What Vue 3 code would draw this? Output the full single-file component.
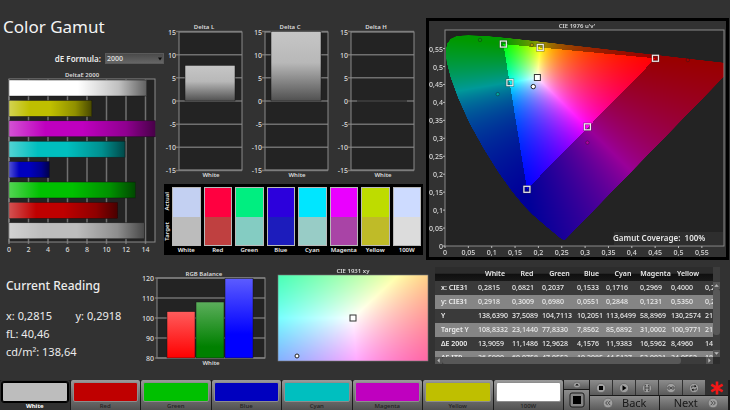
<script setup>
import { onMounted, ref } from 'vue'

const tones = {
  White: '#bdbdbd', Red: '#bf0000', Green: '#00c000', Blue: '#0000bf',
  Cyan: '#00bfbf', Magenta: '#bf00bf', Yellow: '#bfbf00', '100W': '#ffffff',
}

const deltaE = [
  { name: '100W', value: 14.1 },
  { name: 'Yellow', value: 8.5 },
  { name: 'Magenta', value: 15 },
  { name: 'Cyan', value: 11.9 },
  { name: 'Blue', value: 4.15 },
  { name: 'Green', value: 12.96 },
  { name: 'Red', value: 11.15 },
  { name: 'White', value: 13.9 },
]
const deltaETicks = [0, 2, 4, 6, 8, 10, 12, 14]
const deX = (v) => 9 + v * 9.75

const deltas = [
  { title: 'Delta L', value: 7.7 },
  { title: 'Delta C', value: 15 },
  { title: 'Delta H', value: 0 },
]
const deltaTicks = [15, 10, 5, 0, -5, -10, -15]
const dY = (v) => 81 - v * 4.63

const swatches = [
  { name: 'White', actual: '#c3d0f2', target: '#bcbcbc' },
  { name: 'Red', actual: '#ff0040', target: '#bf4040' },
  { name: 'Green', actual: '#00ee80', target: '#84ccc2' },
  { name: 'Blue', actual: '#2c00dc', target: '#1c1cbc' },
  { name: 'Cyan', actual: '#00e6ff', target: '#98ccc6' },
  { name: 'Magenta', actual: '#ea00ff', target: '#a944a6' },
  { name: 'Yellow', actual: '#bedc00', target: '#bfbb28' },
  { name: '100W', actual: '#cddbff', target: '#dcdcdc' },
]

const balance = [
  { x: 22, value: 103.2, fill: 'url(#bal-r)' },
  { x: 51, value: 108, fill: 'url(#bal-g)' },
  { x: 80, value: 119.7, fill: 'url(#bal-b)' },
]
const balanceTicks = [120, 110, 100, 90, 80]
const bY = (v) => 98 - (v - 80) * 2

const columns = ['White', 'Red', 'Green', 'Blue', 'Cyan', 'Magenta', 'Yellow', '100W']
const rows = [
  ['x: CIE31', '0,2815', '0,6821', '0,2037', '0,1533', '0,1716', '0,2969', '0,4000', '0,2815'],
  ['y: CIE31', '0,2918', '0,3009', '0,6980', '0,0551', '0,2848', '0,1231', '0,5350', '0,2918'],
  ['Y', '138,6390', '37,5089', '104,7113', '10,2051', '113,6499', '58,8969', '130,2574', '218,1042'],
  ['Target Y', '108,8332', '23,1440', '77,8330', '7,8562', '85,6892', '31,0002', '100,9771', '218,1042'],
  ['ΔE 2000', '13,9059', '11,1486', '12,9628', '4,1576', '11,9383', '16,5962', '8,4960', '14,1201'],
  ['ΔE ITP', '36,5900', '60,0758', '47,0552', '10,2085', '44,5127', '53,0021', '34,0552', '18,2210'],
]

/* CIE 1976 u'v' plot geometry */
const uX = (u) => 16 + u * 467
const vY = (v) => 225 - v * 359
const uTicks = [0, 0.05, 0.1, 0.15, 0.2, 0.25, 0.3, 0.35, 0.4, 0.45, 0.5, 0.55]
const comma = (n) => String(n).replace('.', ',')
const locus = [
  [0.2568, 0.0165], [0.2545, 0.016], [0.2461, 0.0226], [0.2347, 0.035], [0.2161, 0.0549],
  [0.1877, 0.0871], [0.169, 0.1119], [0.1441, 0.151], [0.1147, 0.2044], [0.0828, 0.2708],
  [0.0521, 0.3427], [0.0282, 0.4117], [0.0119, 0.4698], [0.0035, 0.5131], [0.0014, 0.5432],
  [0.0046, 0.5638], [0.0123, 0.577], [0.0231, 0.5837], [0.036, 0.5861], [0.0501, 0.5868],
  [0.0792, 0.5856], [0.1127, 0.5821], [0.1531, 0.5766], [0.2026, 0.5694], [0.2623, 0.5604],
  [0.3315, 0.5501], [0.4035, 0.5393], [0.4692, 0.5296], [0.5203, 0.5219], [0.583, 0.5125],
  [0.6234, 0.5065],
]
const targets = [
  [0.125, 0.5625], [0.204, 0.553], [0.4507, 0.5229], [0.139, 0.455], [0.305, 0.332], [0.1754, 0.1579],
]
const measured = [
  { u: 0.075, v: 0.574, fill: '#0a9a0a' },
  { u: 0.186, v: 0.56, fill: '#a89a00' },
  { u: 0.52, v: 0.518, fill: '#a80000' },
  { u: 0.113, v: 0.423, fill: '#00a8a0' },
  { u: 0.305, v: 0.288, fill: '#b400a0' },
]

const uvCanvas = ref(null)
const xyCanvas = ref(null)
const SCALE = 3

function linearRgb(X, Y, Z) {
  return [
    3.2406 * X - 1.5372 * Y - 0.4986 * Z,
    -0.9689 * X + 1.8758 * Y + 0.0415 * Z,
    0.0557 * X - 0.204 * Y + 1.057 * Z,
  ]
}

/* Fills a colour field; toXyz maps a plot position to tristimulus values. */
function paintField(w, h, toXyz) {
  const field = document.createElement('canvas')
  field.width = w * SCALE
  field.height = h * SCALE
  const ctx = field.getContext('2d')
  const image = ctx.createImageData(field.width, field.height)
  for (let py = 0, i = 0; py < field.height; py++) {
    for (let px = 0; px < field.width; px++, i += 4) {
      const rgb = linearRgb(...toXyz((px + 0.5) / SCALE, (py + 0.5) / SCALE))
      const top = Math.max(...rgb)
      const level = Math.min(...rgb) < -0.0001 ? 153 : 255
      for (let c = 0; c < 3; c++) image.data[i + c] = (Math.max(0, rgb[c]) / top) * level
      image.data[i + 3] = 255
    }
  }
  ctx.putImageData(image, 0, 0)
  return field
}

onMounted(() => {
  const uv = uvCanvas.value.getContext('2d')
  uv.beginPath()
  uv.rect(16 * SCALE, 9 * SCALE, 279 * SCALE, 216 * SCALE)
  uv.clip()
  uv.beginPath()
  locus.forEach(([u, v]) => uv.lineTo(uX(u) * SCALE, vY(v) * SCALE))
  uv.closePath()
  uv.clip()
  uv.drawImage(paintField(297, 236, (x, y) => {
    const u = (x - 16) / 467
    const v = Math.max(0.001, (225 - y) / 359)
    return [(9 * u) / (4 * v), 1, (12 - 3 * u - 20 * v) / (4 * v)]
  }), 0, 0)

  const xy = xyCanvas.value.getContext('2d')
  xy.beginPath()
  xy.rect(8 * SCALE, 15 * SCALE, 150 * SCALE, 86 * SCALE)
  xy.clip()
  xy.drawImage(paintField(162, 110, (px, py) => {
    const x = 0.3127 + (px - 83) / 1795
    const y = 0.329 - (py - 58) / 1021
    return [x / y, 1, (1 - x - y) / y]
  }), 0, 0)
})
</script>

<template>
  <div class="app">
    <main>
      <section class="upper">
        <div class="left">
          <h1>Color Gamut</h1>
          <div class="formula">
            <label for="formula">dE Formula:</label>
            <div class="select">
              <select id="formula"><option>2000</option></select>
              <svg class="caret" viewBox="0 0 6 4"><path d="M1 0.5h4L3 3.5z" /></svg>
            </div>
          </div>
          <svg class="chart" viewBox="0 0 165 195" role="img" aria-label="DeltaE 2000">
            <defs>
              <linearGradient id="sheen-h">
                <stop offset="0" stop-color="#fff" stop-opacity=".32" />
                <stop offset=".25" stop-color="#fff" stop-opacity="0" />
                <stop offset=".5" stop-color="#000" stop-opacity="0" />
                <stop offset=".8" stop-color="#000" stop-opacity=".25" />
                <stop offset="1" stop-color="#000" stop-opacity=".62" />
              </linearGradient>
            </defs>
            <text class="title" x="82" y="12" text-anchor="middle">DeltaE 2000</text>
            <rect class="plot" x="9" y="14" width="146" height="163" />
            <g class="grid">
              <path v-for="t in deltaETicks" :key="t" :d="`M${deX(t)} 14V179`" />
            </g>
            <rect class="frame" x="9" y="14" width="146" height="163" />
            <g v-for="(b, i) in deltaE" :key="b.name">
              <rect class="outlined" x="9" :y="15 + i * 20.4" :width="deX(b.value) - 9" height="16" :fill="tones[b.name]" />
              <rect x="9" :y="15 + i * 20.4" :width="deX(b.value) - 9" height="16" fill="url(#sheen-h)" />
            </g>
            <text v-for="t in deltaETicks" :key="t" :x="deX(t)" y="187" text-anchor="middle">{{ t }}</text>
          </svg>
        </div>

        <div class="middle">
          <svg class="chart" viewBox="0 0 260 164" role="img" aria-label="Delta charts">
            <defs>
              <linearGradient id="sheen-v" x2="0" y2="1">
                <stop offset="0" stop-color="#c6c6c6" />
                <stop offset=".45" stop-color="#b8b8b8" />
                <stop offset="1" stop-color="#505050" />
              </linearGradient>
            </defs>
            <g v-for="(d, i) in deltas" :key="d.title" :transform="`translate(${i * 86} 0)`">
              <text class="title" x="39" y="9" text-anchor="middle">{{ d.title }}</text>
              <rect class="plot" x="14" y="12" width="63" height="138" />
              <g class="grid">
                <path v-for="t in deltaTicks" :key="t" :d="`M11 ${dY(t)}H77`" />
              </g>
              <rect class="frame" x="14" y="12" width="63" height="138" />
              <rect v-if="d.value" class="outlined" x="20" :y="dY(d.value)" width="50" :height="81 - dY(d.value)" fill="url(#sheen-v)" />
              <path v-else class="flat" d="M20 81h50" />
              <text v-for="t in deltaTicks" :key="t" x="11" :y="dY(t) + 3" text-anchor="end">{{ t }}</text>
              <text class="title" x="46" y="157" text-anchor="middle">White</text>
            </g>
          </svg>
          <div class="swatches">
            <div class="side"><span>Actual</span><span>Target</span></div>
            <div v-for="s in swatches" :key="s.name" class="swatch">
              <div class="pair">
                <i :style="{ background: s.actual }"></i>
                <i :style="{ background: s.target }"></i>
              </div>
              <span>{{ s.name }}</span>
            </div>
          </div>
        </div>

        <div class="gamut">
          <div class="stack">
            <svg class="chart" viewBox="0 0 297 236"><rect class="plot" x="16" y="9" width="279" height="216" /></svg>
            <canvas ref="uvCanvas" width="891" height="708"></canvas>
            <svg class="chart" viewBox="0 0 297 236" role="img" aria-label="CIE 1976 u'v'">
              <text class="title" x="148" y="7" text-anchor="middle">CIE 1976 u'v'</text>
              <rect class="frame" x="16" y="9" width="279" height="216" />
              <rect class="coverage" x="185" y="211" width="109" height="13" />
              <text class="coverage-text" x="184" y="220">Gamut Coverage:&#160; 100%</text>
              <g class="ticks">
                <path v-for="t in uTicks" :key="t" :d="`M${uX(t)} 225v2M14 ${vY(t)}h2`" />
              </g>
              <text v-for="t in uTicks" :key="'u' + t" :x="uX(t)" y="234" text-anchor="middle">{{ comma(t) }}</text>
              <text v-for="t in uTicks" :key="'v' + t" x="14" :y="vY(t) + 3" text-anchor="end">{{ comma(t) }}</text>
              <circle v-for="m in measured" :key="m.u + m.fill" class="dot" :cx="uX(m.u)" :cy="vY(m.v)" r="1.7" :fill="m.fill" />
              <g v-for="t in targets" :key="t[0]">
                <rect class="halo" :x="uX(t[0]) - 3" :y="vY(t[1]) - 3" width="6" height="6" />
                <rect class="mark" :x="uX(t[0]) - 3" :y="vY(t[1]) - 3" width="6" height="6" />
              </g>
              <rect class="white-mark" :x="uX(0.1978) - 3" :y="vY(0.4693) - 3" width="6" height="6" />
              <circle class="white-dot" :cx="uX(0.189)" :cy="vY(0.444)" r="2.2" />
            </svg>
          </div>
        </div>
      </section>

      <section class="lower">
        <div class="reading">
          <h2>Current Reading</h2>
          <p><span>x: 0,2815</span><span>y: 0,2918</span></p>
          <p>fL: 40,46</p>
          <p>cd/m²: 138,64</p>
        </div>

        <svg class="chart" viewBox="0 0 125 110" role="img" aria-label="RGB Balance">
          <defs>
            <linearGradient id="bal-r" x2="0" y2="1"><stop offset="0" stop-color="#ff5c5c" /><stop offset="1" stop-color="#ff0000" /></linearGradient>
            <linearGradient id="bal-g" x2="0" y2="1"><stop offset="0" stop-color="#5cae5c" /><stop offset=".8" stop-color="#008000" /></linearGradient>
            <linearGradient id="bal-b" x2="0" y2="1"><stop offset="0" stop-color="#5c5cff" /><stop offset=".7" stop-color="#0000ff" /></linearGradient>
          </defs>
          <text class="title" x="59" y="16" text-anchor="middle">RGB Balance</text>
          <rect class="plot" x="12" y="18" width="108" height="80" />
          <g class="grid"><path v-for="t in balanceTicks" :key="t" :d="`M10 ${bY(t)}H120`" /></g>
          <rect class="frame" x="12" y="18" width="108" height="80" />
          <rect v-for="b in balance" :key="b.x" class="outlined" :x="b.x" :y="bY(b.value)" width="28" :height="98 - bY(b.value)" :fill="b.fill" />
          <text v-for="t in balanceTicks" :key="t" x="9" :y="bY(t) + 3" text-anchor="end">{{ t }}</text>
          <text class="title" x="66" y="105" text-anchor="middle">White</text>
        </svg>

        <div class="stack">
          <canvas ref="xyCanvas" width="486" height="330"></canvas>
          <svg class="chart" viewBox="0 0 162 110" role="img" aria-label="CIE 1931 xy">
            <text class="title" x="83" y="13" text-anchor="middle">CIE 1931 xy</text>
            <rect class="field-frame" x="8" y="15" width="150" height="86" />
            <rect class="white-mark" x="80" y="55" width="6" height="6" />
            <circle class="white-dot" cx="27" cy="96" r="2" />
          </svg>
        </div>

        <div class="data">
          <div class="viewport">
            <table>
              <colgroup>
                <col class="c0" /><col class="c1" /><col class="c2" /><col class="c3" /><col class="c4" />
                <col class="c1" /><col class="c5" /><col class="c1" /><col class="c1" />
              </colgroup>
              <thead>
                <tr><td></td><th v-for="c in columns" :key="c" scope="col">{{ c }}</th></tr>
              </thead>
              <tbody>
                <tr v-for="r in rows" :key="r[0]">
                  <th scope="row">{{ r[0] }}</th>
                  <td v-for="(v, i) in r.slice(1)" :key="i">{{ v }}</td>
                </tr>
              </tbody>
            </table>
          </div>
          <div class="vbar">
            <button type="button" aria-label="Scroll up"><svg viewBox="0 0 6 6"><path d="M1 4l2-2 2 2z" /></svg></button>
            <i></i>
            <button type="button" aria-label="Scroll down"><svg viewBox="0 0 6 6"><path d="M1 2l2 2 2-2z" /></svg></button>
          </div>
          <div class="hbar">
            <button type="button" aria-label="Scroll left"><svg viewBox="0 0 6 6"><path d="M4 1L2 3l2 2z" /></svg></button>
            <i></i>
            <button type="button" aria-label="Scroll right"><svg viewBox="0 0 6 6"><path d="M2 1l2 2-2 2z" /></svg></button>
          </div>
        </div>
      </section>
    </main>

    <footer>
      <button v-for="(tone, name) in tones" :key="name" type="button" class="tab" :class="{ active: name === 'White' }">
        <i :style="{ background: tone }"></i>
        <span>{{ name }}</span>
      </button>

      <div class="stop-col">
        <button type="button" aria-label="Expand">
          <svg viewBox="0 0 10 8"><ellipse cx="5" cy="4" rx="3.6" ry="2.8" class="ring" /><path d="M3.2 4.6L5 2.8l1.8 1.8z" /></svg>
        </button>
        <button type="button" class="big" aria-label="Pattern">
          <svg viewBox="0 0 16 16"><rect x="1" y="1" width="14" height="14" rx="2" class="well" /><rect x="4" y="4" width="8" height="8" class="ink" /></svg>
        </button>
      </div>

      <div class="controls">
        <div class="tools">
          <button type="button" aria-label="Stop">
            <svg viewBox="0 0 12 12"><circle class="ring" cx="6" cy="6" r="4.6" /><rect x="4" y="4" width="4" height="4" /></svg>
          </button>
          <button type="button" aria-label="Play">
            <svg viewBox="0 0 12 12"><circle class="ring" cx="6" cy="6" r="4.6" /><path d="M4.5 3.3L8.5 6l-4 2.7z" /></svg>
          </button>
          <button type="button" aria-label="Read series">
            <svg viewBox="0 0 12 12"><circle class="ring" cx="6" cy="6" r="4.6" /><path class="line" d="M4 3v6M8 3v6M4 6h4M4 3.3h1M7 3.3h1M4 8.7h1M7 8.7h1" /></svg>
          </button>
          <button type="button" aria-label="Continuous">
            <svg viewBox="0 0 12 12"><circle class="ring" cx="6" cy="6" r="4.6" /><path class="line" d="M6 6C5 4.4 2.7 4.4 2.7 6S5 7.6 6 6s3.3-1.6 3.3 0S7 7.6 6 6z" /></svg>
          </button>
          <button type="button" aria-label="Refresh">
            <svg viewBox="0 0 12 12"><circle class="ring" cx="6" cy="6" r="4.6" /><path class="line" d="M3.7 6.2V4.2h3.5M8.3 5.8v2H4.8" /><path d="M6.6 2.8L8.4 4.2 6.6 5.6zM5.4 6.4L3.6 7.8l1.8 1.4z" /></svg>
          </button>
          <svg class="star" viewBox="0 0 14 14"><path d="M7 .5v13M1.3 3.7l11.400 6.6M12.700 3.7L1.3 10.3" /></svg>
        </div>
        <div class="nav">
          <button type="button">
            <svg viewBox="0 0 12 12"><circle class="ring" cx="6" cy="6" r="4.8" /><path class="line" d="M5.7 3.8L3.7 6l2 2.200M8.3 3.8L6.3 6l2 2.200" /></svg>
            <span>Back</span>
          </button>
          <button type="button" class="next">
            <span>Next</span>
            <svg viewBox="0 0 12 12"><circle class="ring" cx="6" cy="6" r="4.8" /><path class="line" d="M6.3 3.8l2 2.200-2 2.200M3.7 3.8l2 2.200-2 2.200" /></svg>
          </button>
        </div>
      </div>
    </footer>
  </div>
</template>

<style>
body {
  background: #323232;
}
</style>

<style scoped>
* {
  box-sizing: border-box;
}
.app {
  display: flex;
  flex-direction: column;
  min-height: 100vh;
  overflow: hidden;
  background: #323232;
  color: #ececec;
  font-family: "Noto Sans", "Open Sans", sans-serif;
  font-size: 7px;
}
main {
  flex: 1;
}
button {
  padding: 0;
  border: 0;
  font-family: inherit;
  color: inherit;
}
svg,
canvas {
  display: block;
}
.upper {
  display: grid;
  grid-template-columns: 165fr 260fr 305fr;
}
.upper > *,
.lower > * {
  min-width: 0;
}
.chart,
canvas {
  width: 100%;
  height: auto;
}
.chart {
  overflow: visible;
}
.chart text {
  fill: #dcdcdc;
  font-size: 7px;
  font-weight: 500;
}
.chart .title {
  font-size: 6px;
  font-weight: 600;
}
.plot {
  fill: #232323;
}
.frame {
  fill: none;
  stroke: #8a8a8a;
}
.grid path {
  stroke: #707070;
  stroke-width: 1.5;
}
.ticks path {
  stroke: #bbb;
}
.outlined {
  stroke: #151515;
  stroke-width: 0.5;
}
.flat {
  stroke: #151515;
}

/* left column */
h1 {
  margin: 0;
  padding: 14px 0 0 3px;
  font-size: 17px;
  line-height: 26px;
  font-weight: 400;
  color: #f4f4f4;
}
.formula {
  display: flex;
  justify-content: flex-end;
  align-items: center;
  gap: 4px;
  height: 13px;
  margin-top: 12px;
  padding-right: 1px;
  font-size: 8px;
  font-weight: 600;
}
.select {
  position: relative;
  width: 59px;
}
select {
  display: block;
  width: 100%;
  height: 11px;
  padding: 0 1px;
  border: 1px solid #5a5a5a;
  border-radius: 0;
  appearance: none;
  background: linear-gradient(#4a4a4a, #666);
  color: #e4e4e4;
  font-family: inherit;
  font-size: 7px;
  line-height: 9px;
  font-weight: 500;
}
.caret {
  position: absolute;
  top: 4px;
  right: 1px;
  width: 6px;
  height: 4px;
  fill: #0a0a0a;
}

/* swatches */
.middle {
  padding-top: 20px;
}
.swatches {
  display: flex;
  gap: 3px;
  height: 71px;
  margin: 0 2px 0 -1px;
  padding: 3px 2px 0 1px;
  background: #000;
  font-size: 6px;
  font-weight: 600;
}
.side {
  display: flex;
  flex-direction: column;
  justify-content: space-around;
  align-items: center;
  width: 4px;
  height: 59px;
}
.side span {
  writing-mode: vertical-rl;
  transform: rotate(180deg);
  line-height: 8px;
}
.swatch {
  flex: 1;
  min-width: 0;
  display: flex;
  flex-direction: column;
  align-items: center;
  line-height: 8px;
}
.pair {
  display: grid;
  grid-template-rows: 1fr 1fr;
  width: 100%;
  height: 59px;
  border: 1px solid #b9b9b9;
}

/* gamut plot */
.gamut {
  margin: 18px 1px 0;
  border: 3px solid #000;
}
.stack {
  display: grid;
}
.stack > * {
  grid-area: 1 / 1;
}
.coverage {
  fill: #2e2e2e;
}
.chart .coverage-text {
  font-size: 8px;
  font-weight: 600;
  fill: #e6e6e6;
}
.dot {
  stroke: #1c1c1c;
  stroke-opacity: 0.6;
  stroke-width: 0.7;
}
.halo {
  fill: none;
  stroke: #333;
  stroke-opacity: 0.5;
  stroke-width: 2.4;
}
.mark {
  fill: none;
  stroke: #ececec;
  stroke-width: 1.2;
}
.white-mark {
  fill: #fff;
  stroke: #333;
  stroke-width: 1;
}
.white-dot {
  fill: #fff;
  stroke: #222;
  stroke-width: 1;
}
.field-frame {
  fill: none;
  stroke: #777;
  stroke-width: 0.6;
}

/* lower section */
.lower {
  display: grid;
  grid-template-columns: 145fr 125fr 162fr 298fr;
  align-items: start;
}
.reading {
  padding: 18px 0 0 6px;
  font-size: 11px;
}
h2 {
  margin: 0 0 13px;
  font-size: 12px;
  line-height: 16px;
  font-weight: 500;
}
.reading p {
  display: grid;
  grid-template-columns: 1fr 1fr;
  margin: 0;
  line-height: 18px;
  white-space: nowrap;
}

.data {
  display: grid;
  grid-template-columns: 1fr 7px;
  grid-template-rows: 90px 7px;
  margin: 7px 10px 0 3px;
  background: #2c2c2c;
}
.viewport {
  overflow: hidden;
}
table {
  width: 304px;
  table-layout: fixed;
  border-collapse: collapse;
  white-space: nowrap;
}
.c0 { width: 43px; }
.c1 { width: 34px; }
.c2 { width: 30px; }
.c3 { width: 35px; }
.c4 { width: 29px; }
.c5 { width: 31px; }
tr {
  height: 14px;
}
td,
th {
  padding: 0;
  line-height: 14px;
  font-weight: 500;
}
thead tr {
  background: linear-gradient(#2c2c2c 45%, #0f0f0f 50%, #181818);
}
thead th {
  text-align: center;
  font-weight: 600;
}
tbody th {
  padding-left: 6px;
  text-align: left;
  font-weight: 600;
}
tbody tr {
  background: #3a3a3a;
}
tbody tr:nth-child(even) {
  background: #858585;
}
.vbar,
.hbar {
  display: flex;
  background: #3c3c3c;
}
.vbar {
  flex-direction: column;
  padding-top: 15px;
}
.vbar button,
.hbar button {
  flex: none;
  width: 7px;
  height: 7px;
  background: #555;
}
.vbar svg,
.hbar svg {
  width: 7px;
  height: 7px;
  fill: #bbb;
}
.vbar i,
.hbar i {
  border-radius: 3px;
  background: #585858;
}
.vbar i {
  height: 46px;
  margin-bottom: auto;
}
.hbar i {
  flex: 0 0 86%;
  margin-right: auto;
}

/* footer */
footer {
  display: grid;
  grid-template-columns: repeat(8, 1fr) 26px 138px;
  height: 30px;
  padding-right: 2px;
  background: #1a1a1a;
}
.tab {
  display: flex;
  flex-direction: column;
  align-items: stretch;
  min-width: 0;
  margin-right: 1px;
  padding: 2px 2px 0;
  border-radius: 2px 2px 0 0;
  background: linear-gradient(#9a9a9a, #525252);
  color: #222;
  font-size: 6px;
  font-weight: 500;
  line-height: 8px;
}
.tab i {
  height: 20px;
  border: 1px solid #8d8d8d;
  border-radius: 2px;
}
.tab.active {
  background: #303030;
  color: #fff;
  font-weight: 700;
}
.tab.active i {
  border-color: #000;
  outline: 1px solid #000;
}
.stop-col {
  display: grid;
  grid-template-rows: 9px 1fr;
  gap: 1px;
  margin-right: 1px;
}
.stop-col button,
.tools button,
.nav button {
  display: flex;
  align-items: center;
  justify-content: center;
  min-width: 0;
  background: linear-gradient(#8c8c8c, #5a5a5a);
  color: #181818;
}
.stop-col svg {
  width: 10px;
  height: 8px;
}
.stop-col .big svg {
  width: 16px;
  height: 16px;
}
.well {
  fill: #858585;
  stroke: #1a1a1a;
}
.ink {
  fill: #000;
}
.controls {
  display: grid;
  grid-template-rows: 15px 14px;
  gap: 1px;
}
.tools {
  display: grid;
  grid-template-columns: repeat(6, 1fr);
  gap: 1px;
  background: #323232;
}
.tools button svg {
  width: 12px;
  height: 12px;
}
.ring {
  fill: #a0a0a0;
  stroke: #5c5c5c;
  stroke-width: 0.6;
}
.line {
  fill: none;
  stroke: #333;
  stroke-width: 0.8;
}
.star {
  width: 14px;
  height: 14px;
  margin: auto;
}
.star path {
  stroke: #f01818;
  stroke-width: 2.6;
}
.nav {
  display: grid;
  grid-template-columns: 1fr 1fr;
  gap: 1px;
}
.nav button {
  gap: 8px;
  font-size: 11px;
  line-height: 14px;
}
.nav .next {
  gap: 9px;
  padding-left: 5px;
}
.nav svg {
  width: 12px;
  height: 12px;
}
</style>
